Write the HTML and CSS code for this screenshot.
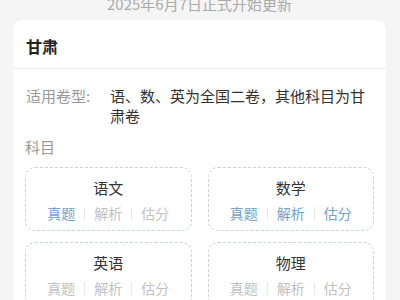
FILE: index.html
```html
<!DOCTYPE html>
<html lang="zh-CN">
<head>
    <meta charset="UTF-8">
    <meta name="viewport" content="width=device-width, initial-scale=1.0">
    <title>甘肃</title>
    <link rel="stylesheet" href="styles.css">
</head>
<body>
    <div class="notice">2025年6月7日正式开始更新</div>

    <div class="card">
        <div class="card-title">甘肃</div>
        <div class="card-body">
            <div class="info-row">
                <div class="info-label">适用卷型:</div>
                <div class="info-value">语、数、英为全国二卷，其他科目为甘肃卷</div>
            </div>
            <div class="section-label">科目</div>
            <div class="subjects">
                <div class="subject">
                    <div class="subject-name">语文</div>
                    <div class="subject-links">
                        <span class="link active">真题</span>
                        <span class="sep"></span>
                        <span class="link">解析</span>
                        <span class="sep"></span>
                        <span class="link">估分</span>
                    </div>
                </div>
                <div class="subject">
                    <div class="subject-name">数学</div>
                    <div class="subject-links">
                        <span class="link active">真题</span>
                        <span class="sep"></span>
                        <span class="link active">解析</span>
                        <span class="sep"></span>
                        <span class="link active">估分</span>
                    </div>
                </div>
                <div class="subject">
                    <div class="subject-name">英语</div>
                    <div class="subject-links">
                        <span class="link">真题</span>
                        <span class="sep"></span>
                        <span class="link">解析</span>
                        <span class="sep"></span>
                        <span class="link">估分</span>
                    </div>
                </div>
                <div class="subject">
                    <div class="subject-name">物理</div>
                    <div class="subject-links">
                        <span class="link">真题</span>
                        <span class="sep"></span>
                        <span class="link">解析</span>
                        <span class="sep"></span>
                        <span class="link">估分</span>
                    </div>
                </div>
            </div>
        </div>
    </div>
</body>
</html>
```

FILE: styles.css
```css
body {
    margin: 0;
    padding: 0 14px 0 13px;
    background: #f5f5f6;
    font-family: "Noto Sans CJK SC", "Noto Sans", sans-serif;
    color: #333;
    overflow: hidden;
}

.notice {
    margin-top: -7px;
    height: 27px;
    line-height: 22px;
    text-align: center;
    font-size: 15px;
    color: #aaa;
}

.card {
    background: #fff;
    border-radius: 10px;
}

.card-title {
    height: 48px;
    line-height: 52px;
    padding: 0 13px;
    font-size: 16px;
    font-weight: bold;
    color: #222;
    border-bottom: 1px solid #ececec;
}

.card-body {
    padding: 17px 12px 12px 12px;
}

.info-row {
    display: flex;
    font-size: 15px;
    line-height: 20px;
}

.info-label {
    width: 84px;
    flex-shrink: 0;
    padding-left: 1px;
    color: #999;
}

.info-value {
    color: #333;
}

.section-label {
    margin-top: 11px;
    font-size: 15px;
    line-height: 20px;
    color: #999;
}

.subjects {
    display: grid;
    grid-template-columns: 1fr 1fr;
    column-gap: 16px;
    row-gap: 11px;
    margin-top: 10px;
}

.subject {
    height: 62px;
    border: 1px dashed #c9d1db;
    border-radius: 10px;
    text-align: center;
}

.subject-name {
    margin-top: 10px;
    font-size: 15px;
    line-height: 20px;
    color: #333;
}

.subject-links {
    display: flex;
    justify-content: center;
    align-items: center;
    margin-top: 5px;
    font-size: 14px;
    line-height: 20px;
}

.link {
    color: #c2c2c2;
}

.link.active {
    color: #6fa2cc;
}

.sep {
    width: 1px;
    height: 13px;
    margin: 0 9px;
    background: #e6e6e6;
}
```
